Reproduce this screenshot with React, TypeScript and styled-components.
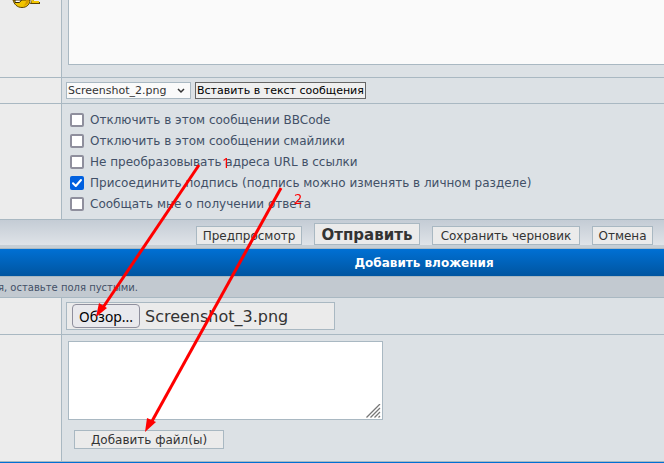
import React from "react";
import styled, { createGlobalStyle } from "styled-components";

const line = "#a9b8c2";
const sans = 'Verdana, "DejaVu Sans", sans-serif';

const GlobalStyle = createGlobalStyle`
  *, *::before, *::after { box-sizing: border-box; }
  body { margin: 0; background: #dce1e5; font-family: ${sans}; }
  button, select, textarea, input { font-family: inherit; margin: 0; }
`;

const Page = styled.main`
  position: relative;
  overflow: hidden;
  color: #333;
`;

const Row = styled.section`
  display: grid;
  grid-template-columns: 62px 1fr;
  border-bottom: 1px solid ${line};
`;

const SideCell = styled.div`
  background: #ececec;
  border-right: 1px solid ${line};
`;

const Cell = styled.div<{ $pad: string }>`
  background: #dce1e5;
  padding: ${(p) => p.$pad};
  min-width: 0;
`;

const Smiley = styled.svg`
  display: block;
  margin-left: 12px;
`;

const MessageBox = styled.textarea`
  display: block;
  width: 100%;
  height: 65px;
  border: 1px solid ${line};
  border-width: 0 0 1px 1px;
  background: #fafafa;
  resize: none;
  outline: none;
`;

const PickRow = styled.div`
  display: flex;
  gap: 4px;
`;

const SelectWrap = styled.div`
  position: relative;
  width: 125px;
`;

const FileSelect = styled.select`
  appearance: none;
  display: block;
  width: 100%;
  height: 17px;
  padding: 0 0 0 1px;
  border: 1px solid ${line};
  border-radius: 0;
  background: #fafafa;
  color: #333;
  font-size: 11px;
  line-height: 15px;
`;

const Chevron = styled.svg`
  position: absolute;
  right: 6px;
  top: 6px;
  pointer-events: none;
`;

const InsertButton = styled.button`
  height: 17px;
  padding: 0 1px;
  border: 1px solid #666;
  background: #efefef;
  color: #000;
  font-size: 11px;
  line-height: 15px;
  white-space: nowrap;
`;

const Options = styled.div`
  display: flex;
  flex-direction: column;
`;

const Option = styled.label`
  display: flex;
  align-items: center;
  gap: 6px;
  height: 21px;
  color: #425067;
  font-size: 12px;
  white-space: nowrap;
`;

const Check = styled.input`
  appearance: none;
  flex: none;
  width: 14px;
  height: 14px;
  border: 2px solid #8f8f9d;
  border-radius: 2px;
  background: #fff;
  &:checked {
    border: 0;
    background: #0060df
      url("data:image/svg+xml,%3Csvg xmlns='http://www.w3.org/2000/svg' viewBox='0 0 14 14'%3E%3Cpath d='M3 7.2 L5.8 10 L11 4' fill='none' stroke='white' stroke-width='2' stroke-linecap='round' stroke-linejoin='round'/%3E%3C/svg%3E")
      center / 14px 14px;
  }
`;

const Actions = styled.div`
  display: flex;
  align-items: flex-end;
  justify-content: center;
  gap: 12px;
  height: 29px;
  padding: 0 0 3px 185px;
  border-bottom: 1px solid ${line};
  background: linear-gradient(#c4ccd5, #dfe3e8 25px, #c6ced5 25px);
`;

const ActionButton = styled.button<{ $main?: boolean; $width: number }>`
  flex: none;
  width: ${(p) => p.$width}px;
  height: ${(p) => (p.$main ? 22 : 19)}px;
  padding: 1px 0 0;
  border: 1px solid ${line};
  background: #ebebeb;
  color: #333;
  font-size: ${(p) => (p.$main ? 15 : 12)}px;
  font-weight: ${(p) => (p.$main ? 700 : 400)};
  line-height: 16px;
  white-space: nowrap;
`;

const Heading = styled.h2`
  margin: 0;
  height: 28px;
  padding-left: 184px;
  border-bottom: 1px solid ${line};
  background: linear-gradient(#0070d4, #0055a0);
  color: #fff;
  font-size: 12px;
  font-weight: 700;
  line-height: 28px;
  text-align: center;
`;

const Hint = styled.p`
  margin: 0;
  height: 21px;
  border-bottom: 1px solid ${line};
  background: #c2c9d0;
  color: #425067;
  font-size: 10px;
  line-height: 21px;
  text-indent: -2px;
  white-space: nowrap;
`;

const FileField = styled.label`
  position: relative;
  display: flex;
  align-items: center;
  gap: 5px;
  width: 269px;
  height: 28px;
  padding-left: 5px;
  border: 1px solid ${line};
  background: #ebebeb;
  font-size: 16px;
`;

const NativeFile = styled.input`
  position: absolute;
  inset: 0;
  width: 100%;
  opacity: 0;
`;

const Browse = styled.span`
  width: 68px;
  height: 24px;
  border: 1px solid #8f8f9d;
  border-radius: 4px;
  background: #e9e9ed;
  color: #000;
  font-family: "Noto Sans", sans-serif;
  font-size: 14px;
  line-height: 23px;
  text-align: center;
`;

const CommentWrap = styled.div`
  position: relative;
  width: 315px;
`;

const Comment = styled.textarea`
  display: block;
  width: 100%;
  height: 79px;
  border: 1px solid ${line};
  background: #fff;
  resize: none;
`;

const Grip = styled.svg`
  position: absolute;
  right: 2px;
  bottom: 2px;
  pointer-events: none;
`;

const AddRow = styled.div`
  display: flex;
  padding: 10px 0 0 6px;
`;

const Footer = styled.div`
  height: 1px;
  background: #0070d4;
`;

const Marks = styled.svg`
  position: absolute;
  left: 0;
  top: 0;
  pointer-events: none;
`;

const options = [
  { text: "Отключить в этом сообщении BBCode", on: false },
  { text: "Отключить в этом сообщении смайлики", on: false },
  { text: "Не преобразовывать адреса URL в ссылки", on: false },
  { text: "Присоединить подпись (подпись можно изменять в личном разделе)", on: true },
  { text: "Сообщать мне о получении ответа", on: false },
];

export default function App() {
  return (
    <Page>
      <GlobalStyle />
      <Row>
        <SideCell>
          <Smiley width="30" height="9" viewBox="0 0 30 9" aria-hidden="true">
            <path d="M1 0 C2 4 5 7.5 10 7.5 C15 7.5 18 4 18 0 Z" fill="#f2c500" stroke="#5c4300" />
            <path d="M11 6 C15 5 17 3 17 0 H14 C14 3 13 5 11 6 Z" fill="#d69a00" />
            <path d="M3 0 V2.5 H7.5 L9.5 0 Z" fill="#fff" stroke="#3a2b00" />
            <path d="M21 0 L19.5 3 H28" fill="none" stroke="#5c4300" strokeWidth="2" />
            <path d="M20.5 0 V2 H27" fill="none" stroke="#f2c500" strokeWidth="2" />
          </Smiley>
        </SideCell>
        <Cell $pad="0 0 12px 6px">
          <MessageBox aria-label="Сообщение" />
        </Cell>
      </Row>
      <Row>
        <SideCell />
        <Cell $pad="4px 0 4px 4px">
          <PickRow>
            <SelectWrap>
              <FileSelect aria-label="Вложение">
                <option>Screenshot_2.png</option>
              </FileSelect>
              <Chevron width="8" height="6" viewBox="0 0 8 6" aria-hidden="true">
                <path d="M1 1 L4 4 L7 1" fill="none" stroke="#333" strokeWidth="1.5" />
              </Chevron>
            </SelectWrap>
            <InsertButton type="button">Вставить в текст сообщения</InsertButton>
          </PickRow>
        </Cell>
      </Row>
      <Row>
        <SideCell />
        <Cell $pad="5px 0 5px 8px">
          <Options>
            {options.map((o) => (
              <Option key={o.text}>
                <Check type="checkbox" defaultChecked={o.on} />
                {o.text}
              </Option>
            ))}
          </Options>
        </Cell>
      </Row>
      <Actions>
        <ActionButton type="button" $width={106}>Предпросмотр</ActionButton>
        <ActionButton type="submit" $main $width={106}>Отправить</ActionButton>
        <ActionButton type="button" $width={148}>Сохранить черновик</ActionButton>
        <ActionButton type="button" $width={61}>Отмена</ActionButton>
      </Actions>
      <Heading>Добавить вложения</Heading>
      <Hint>я, оставьте поля пустыми.</Hint>
      <Row>
        <SideCell />
        <Cell $pad="4px">
          <FileField>
            <NativeFile type="file" />
            <Browse>Обзор...</Browse>
            Screenshot_3.png
          </FileField>
        </Cell>
      </Row>
      <Row>
        <SideCell />
        <Cell $pad="6px 0 12px 6px">
          <CommentWrap>
            <Comment aria-label="Комментарий к файлу" />
            <Grip width="15" height="14" viewBox="0 0 15 14" aria-hidden="true">
              <path d="M0.5 13.5 L14 0 M4.5 13.5 L14 4 M8.5 13.5 L14 8 M12.5 13.5 L14 12" stroke="#777" strokeWidth="1.3" />
            </Grip>
          </CommentWrap>
          <AddRow>
            <ActionButton type="button" $width={150}>Добавить файл(ы)</ActionButton>
          </AddRow>
        </Cell>
      </Row>
      <Footer />
      <Marks width="664" height="463" viewBox="0 0 664 463" aria-hidden="true">
        <g stroke="#f00" strokeWidth="3">
          <path d="M199 165 L102 309" />
          <path d="M281 188 L151 423" />
        </g>
        <path d="M96 317 L99 303 L107 308 Z M145 432 L147 418 L156 422 Z" fill="#f00" />
        <g fill="#f00" fontFamily='"Noto Sans", sans-serif' fontSize="14">
          <text x="222" y="168">1</text>
          <text x="294" y="204">2</text>
        </g>
      </Marks>
    </Page>
  );
}
